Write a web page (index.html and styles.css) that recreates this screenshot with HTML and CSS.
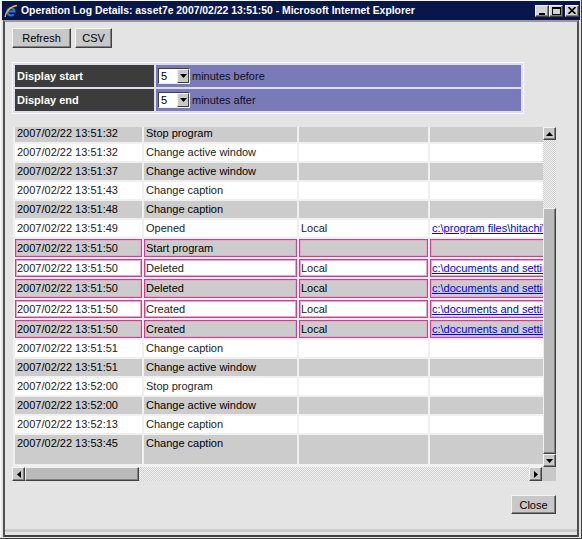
FILE: index.html
```html
<!DOCTYPE html>
<html>
<head>
<meta charset="utf-8">
<title>Operation Log Details</title>
<link rel="stylesheet" href="styles.css">
</head>
<body>
<div class="window">
  <div class="titlebar">
    <svg class="app-icon" width="14" height="14" viewBox="0 0 14 14">
      <path d="M3.2 7.4 H10.6 A3.7 3.7 0 1 0 9.7 10.2" fill="none" stroke="#2f6fd8" stroke-width="2.2"/>
      <path d="M1.2 13 C1.5 8 6 2.5 13 1.5" fill="none" stroke="#f2b81c" stroke-width="1.4"/>
    </svg>
    <span class="title">Operation Log Details: asset7e 2007/02/22 13:51:50 - Microsoft Internet Explorer</span>
    <div class="caption-buttons">
      <span class="cap-btn"><svg width="8" height="8" viewBox="0 0 8 8"><rect x="1" y="6" width="6" height="2" fill="#000"/></svg></span>
      <span class="cap-btn"><svg width="9" height="8" viewBox="0 0 9 8"><rect x="0.5" y="0.5" width="8" height="7" fill="none" stroke="#000"/><rect x="0" y="0" width="9" height="2" fill="#000"/></svg></span>
      <span class="cap-btn close-btn"><svg width="8" height="7" viewBox="0 0 8 7"><path d="M0.5 0 L7.5 7 M7.5 0 L0.5 7" stroke="#000" stroke-width="1.6"/></svg></span>
    </div>
  </div>
  <div class="frame">
    <div class="client">
      <div class="toolbar">
        <button class="btn btn-refresh">Refresh</button>
        <button class="btn btn-csv">CSV</button>
      </div>

      <table class="range">
        <tr>
          <th>Display start</th>
          <td><span class="select"><span class="sel-val">5</span><span class="sel-btn"><svg width="7" height="4" viewBox="0 0 7 4"><path d="M0 0 H7 L3.5 4 Z" fill="#000"/></svg></span></span><span class="sel-label">minutes before</span></td>
        </tr>
        <tr>
          <th>Display end</th>
          <td><span class="select"><span class="sel-val">5</span><span class="sel-btn"><svg width="7" height="4" viewBox="0 0 7 4"><path d="M0 0 H7 L3.5 4 Z" fill="#000"/></svg></span></span><span class="sel-label">minutes after</span></td>
        </tr>
      </table>

      <div class="log">
        <div class="log-main">
          <div class="log-view">
            <table class="log-table">
              <colgroup><col class="c1"><col class="c2"><col class="c3"><col class="c4"></colgroup>
              <tr class="g"><td>2007/02/22 13:51:32</td><td>Stop program</td><td></td><td></td></tr>
              <tr class="w"><td>2007/02/22 13:51:32</td><td>Change active window</td><td></td><td></td></tr>
              <tr class="g"><td>2007/02/22 13:51:37</td><td>Change active window</td><td></td><td></td></tr>
              <tr class="w"><td>2007/02/22 13:51:43</td><td>Change caption</td><td></td><td></td></tr>
              <tr class="g"><td>2007/02/22 13:51:48</td><td>Change caption</td><td></td><td></td></tr>
              <tr class="w"><td>2007/02/22 13:51:49</td><td>Opened</td><td>Local</td><td><a href="#">c:\program files\hitachi\jp1itdma\bin</a></td></tr>
              <tr class="g hl"><td>2007/02/22 13:51:50</td><td>Start program</td><td></td><td></td></tr>
              <tr class="w hl"><td>2007/02/22 13:51:50</td><td>Deleted</td><td>Local</td><td><a href="#">c:\documents and settings\user</a></td></tr>
              <tr class="g hl"><td>2007/02/22 13:51:50</td><td>Deleted</td><td>Local</td><td><a href="#">c:\documents and settings\user</a></td></tr>
              <tr class="w hl"><td>2007/02/22 13:51:50</td><td>Created</td><td>Local</td><td><a href="#">c:\documents and settings\user</a></td></tr>
              <tr class="g hl"><td>2007/02/22 13:51:50</td><td>Created</td><td>Local</td><td><a href="#">c:\documents and settings\user</a></td></tr>
              <tr class="w"><td>2007/02/22 13:51:51</td><td>Change caption</td><td></td><td></td></tr>
              <tr class="g"><td>2007/02/22 13:51:51</td><td>Change active window</td><td></td><td></td></tr>
              <tr class="w"><td>2007/02/22 13:52:00</td><td>Stop program</td><td></td><td></td></tr>
              <tr class="g"><td>2007/02/22 13:52:00</td><td>Change active window</td><td></td><td></td></tr>
              <tr class="w"><td>2007/02/22 13:52:13</td><td>Change caption</td><td></td><td></td></tr>
              <tr class="g last"><td>2007/02/22 13:53:45</td><td>Change caption</td><td></td><td></td></tr>
            </table>
          </div>
          <div class="vscroll">
            <span class="sb-btn"><svg width="7" height="4" viewBox="0 0 7 4"><path d="M0 4 H7 L3.5 0 Z" fill="#000"/></svg></span>
            <span class="sb-track vtrack-top"></span>
            <span class="sb-thumb vthumb"></span>
            <span class="sb-btn"><svg width="7" height="4" viewBox="0 0 7 4"><path d="M0 0 H7 L3.5 4 Z" fill="#000"/></svg></span>
          </div>
        </div>
        <div class="hscroll">
          <span class="sb-btn"><svg width="4" height="7" viewBox="0 0 4 7"><path d="M4 0 V7 L0 3.5 Z" fill="#000"/></svg></span>
          <span class="sb-thumb hthumb"></span>
          <span class="sb-track htrack"></span>
          <span class="sb-btn"><svg width="4" height="7" viewBox="0 0 4 7"><path d="M0 0 V7 L4 3.5 Z" fill="#000"/></svg></span>
          <span class="sb-corner"></span>
        </div>
      </div>

      <div class="footer">
        <button class="btn btn-close">Close</button>
      </div>
    </div>
    <div class="statusbar"></div>
  </div>
</div>
</body>
</html>
```
FILE: styles.css
```css
* { box-sizing: border-box; }

html, body {
  margin: 0;
  padding: 0;
}

body {
  width: 582px;
  height: 539px;
  overflow: hidden;
  background: #e4e4e4;
  font-family: "Liberation Sans", Arial, sans-serif;
  font-size: 11px;
  color: #000;
}

.window {
  width: 582px;
  height: 539px;
  padding: 1px 1px 2px 1px;
  background: #e4e4e4;
  display: flex;
  flex-direction: column;
  box-shadow: inset -1px -1px 0 #404040, inset 1px 1px 0 #f8f8f8;
}

/* title bar */
.titlebar {
  height: 19px;
  flex: none;
  margin: 0 1px 0 1px;
  background: #08164a;
  display: flex;
  align-items: center;
  padding: 0 1px 0 2px;
}

.app-icon { flex: none; margin-right: 3px; }

.title {
  color: #fff;
  font-weight: bold;
  font-size: 10.4px;
  white-space: nowrap;
  flex: 1;
  overflow: hidden;
}

.caption-buttons {
  display: flex;
  align-items: center;
  flex: none;
}

.cap-btn {
  width: 14px;
  height: 12px;
  background: #d4d4d4;
  display: flex;
  align-items: center;
  justify-content: center;
  border: 1px solid;
  border-color: #f4f4f4 #404040 #404040 #f4f4f4;
  box-shadow: inset -1px -1px 0 #808080;
}

.close-btn { margin-left: 2px; }

/* frame */
.frame {
  flex: 1;
  margin: 0 2px 0 2px;
  border-top: 2px solid #9a9a9a;
  border-left: 2px solid #505050;
  border-right: 2px solid #505050;
  display: flex;
  flex-direction: column;
}

.client {
  flex: 1;
  background: #e4e4e4;
  padding: 6px 0 0 7px;
}

.statusbar {
  height: 8px;
  flex: none;
  background: #e4e4e4;
  border-top: 3px solid #cacaca;
  border-bottom: 2px solid #404040;
}

/* buttons */
.btn {
  font-family: "Liberation Sans", Arial, sans-serif;
  font-size: 11px;
  color: #000;
  background: #c8c8c8;
  border: 1px solid;
  border-color: #f4f4f4 #404040 #404040 #f4f4f4;
  box-shadow: inset -1px -1px 0 #808080;
  height: 20px;
  padding: 0;
  margin: 0;
}

.toolbar {
  display: flex;
  gap: 4px;
  height: 20px;
}

.btn-refresh { width: 59px; }
.btn-csv { width: 37px; }

/* range table */
.range {
  margin-top: 14px;
  width: 512px;
  border: 1px solid #fafafa;
  border-spacing: 2px;
  background: #dedeea;
}

.range th {
  width: 139px;
  height: 22px;
  padding: 0 2px;
  background: #3c3c3c;
  color: #fff;
  font-weight: bold;
  text-align: left;
  font-size: 11px;
}

.range td {
  height: 22px;
  padding: 0 2px;
  background: #7a7ab8;
  white-space: nowrap;
}

.select {
  display: inline-flex;
  vertical-align: middle;
  width: 32px;
  height: 16px;
  background: #fff;
  border: 1px solid;
  border-color: #404040 #f0f0f0 #f0f0f0 #404040;
}

.sel-val {
  flex: 1;
  padding-left: 2px;
  line-height: 14px;
}

.sel-btn {
  width: 12px;
  height: 14px;
  background: #c8c8c8;
  border: 1px solid;
  border-color: #f4f4f4 #404040 #404040 #f4f4f4;
  display: flex;
  align-items: center;
  justify-content: center;
}

.sel-label {
  vertical-align: middle;
  margin-left: 2px;
  color: #111;
}

/* log */
.log {
  margin-top: 13px;
  width: 544px;
}

.log-main {
  display: flex;
  height: 340px;
}

.log-view {
  width: 530px;
  margin-left: 1px;
  overflow: hidden;
  background: #f0f0f0;
}

.log-table {
  table-layout: fixed;
  width: 620px;
  border-collapse: separate;
  border-spacing: 2px;
  margin-top: -4px;
  background: #f0f0f0;
}

.c1 { width: 127px; }
.c2 { width: 153px; }
.c3 { width: 129px; }
.c4 { width: 203px; }

.log-table td {
  padding: 2px 2px 2px 2px;
  line-height: 13px;
  white-space: nowrap;
  overflow: hidden;
  vertical-align: top;
}

.log-table tr.g td { background: #cccccc; color: #000; }
.log-table tr.w td { background: #ffffff; color: #222; }

.log-table tr.hl td {
  border: 1px solid #cf3d8c;
  box-shadow: inset 0 0 0 1px #e6a8c8;
  padding: 2px 1px 1.2px 1px;
}

.log-table tr.last td { padding-bottom: 14px; }

.log-table a {
  color: #0000ff;
  text-decoration: underline;
}

/* scrollbars */
.vscroll {
  width: 13px;
  display: flex;
  flex-direction: column;
}

.sb-btn {
  flex: none;
  width: 13px;
  height: 13px;
  background: #c8c8c8;
  border: 1px solid;
  border-color: #f4f4f4 #404040 #404040 #f4f4f4;
  box-shadow: inset -1px -1px 0 #808080;
  display: flex;
  align-items: center;
  justify-content: center;
}

.sb-track {
  background-color: #f2f2f2;
  background-image: repeating-conic-gradient(#d0d0d0 0 25%, #f2f2f2 0 50%);
  background-size: 2px 2px;
}

.vtrack-top { height: 68px; flex: none; }

.sb-thumb {
  background: #bababa;
  border: 1px solid;
  border-color: #f0f0f0 #404040 #404040 #f0f0f0;
  box-shadow: inset -1px -1px 0 #808080;
}

.vthumb { flex: 1; }

.hscroll {
  display: flex;
  height: 14px;
}

.hscroll .sb-btn { height: 14px; }

.hthumb { width: 114px; flex: none; }
.htrack { flex: 1; }

.sb-corner {
  width: 14px;
  flex: none;
  background: #c8c8c8;
}

.footer {
  display: flex;
  justify-content: flex-end;
  margin-top: 14px;
  padding-right: 21px;
}

.btn-close {
  width: 45px;
  height: 19px;
}
```
